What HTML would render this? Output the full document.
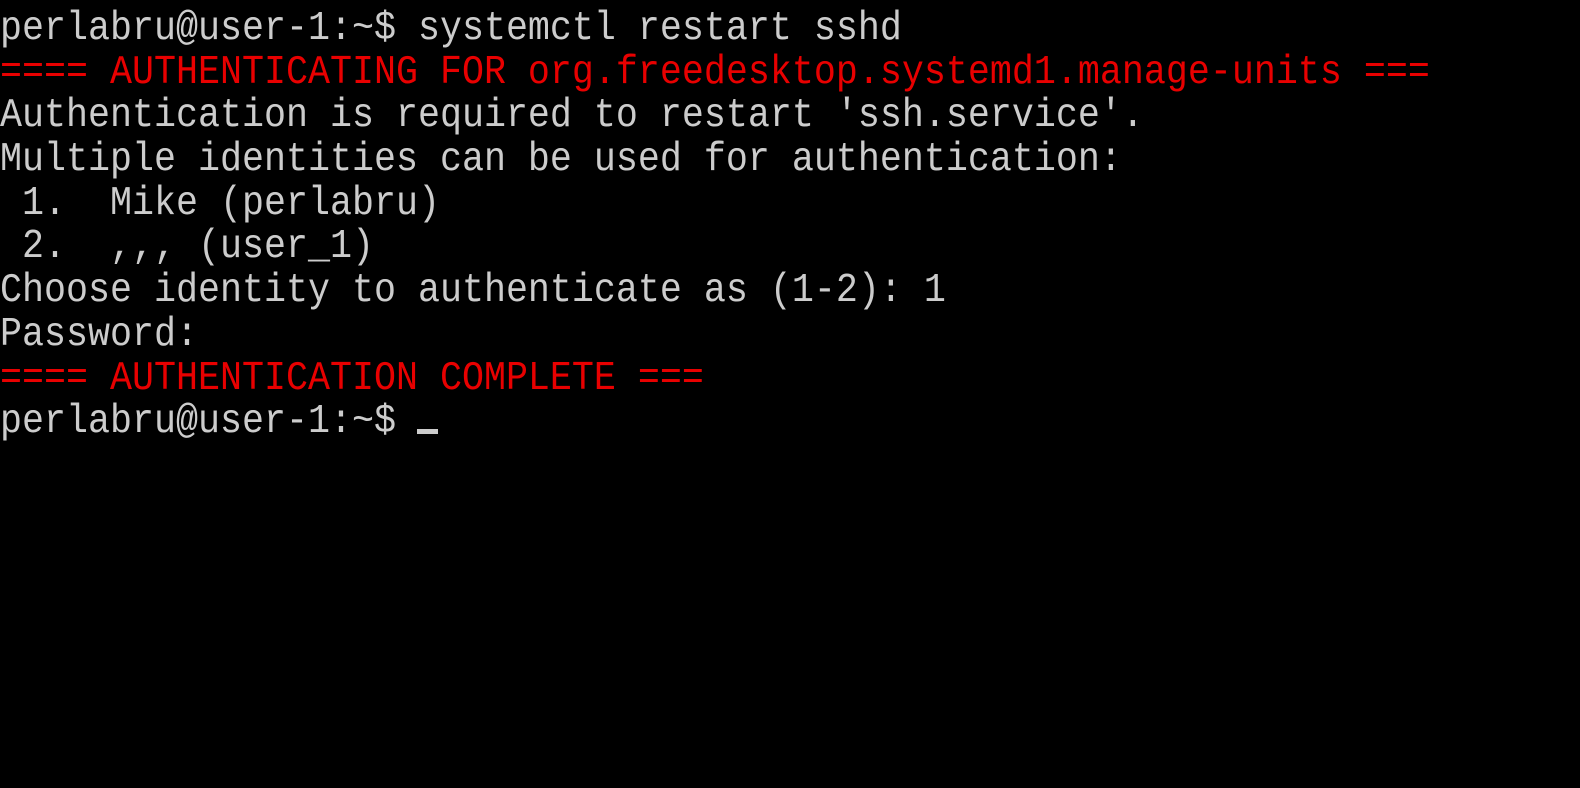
<!DOCTYPE html>
<html><head><meta charset="utf-8"><style>
html,body{margin:0;padding:0;background:#000;width:1580px;height:788px;overflow:hidden}
#t{position:absolute;left:0;top:9px;font-family:"Liberation Mono","DejaVu Sans Mono",monospace;font-size:36.67px;line-height:43.7px;color:#cccccc;white-space:pre}
.l{height:43.7px;transform:scaleY(1.1);transform-origin:0 31.5px}
.r{color:#e80000}
#cur{position:absolute;left:417px;top:429px;width:21px;height:5px;background:#cccccc}
</style></head><body>
<div id="t"><div class="l">perlabru@user-1:~$ systemctl restart sshd</div><div class="l r">==== AUTHENTICATING FOR org.freedesktop.systemd1.manage-units ===</div><div class="l">Authentication is required to restart 'ssh.service'.</div><div class="l">Multiple identities can be used for authentication:</div><div class="l"> 1.  Mike (perlabru)</div><div class="l"> 2.  ,,, (user_1)</div><div class="l">Choose identity to authenticate as (1-2): 1</div><div class="l">Password:</div><div class="l r">==== AUTHENTICATION COMPLETE ===</div><div class="l">perlabru@user-1:~$ </div></div>
<div id="cur"></div>
</body></html>
